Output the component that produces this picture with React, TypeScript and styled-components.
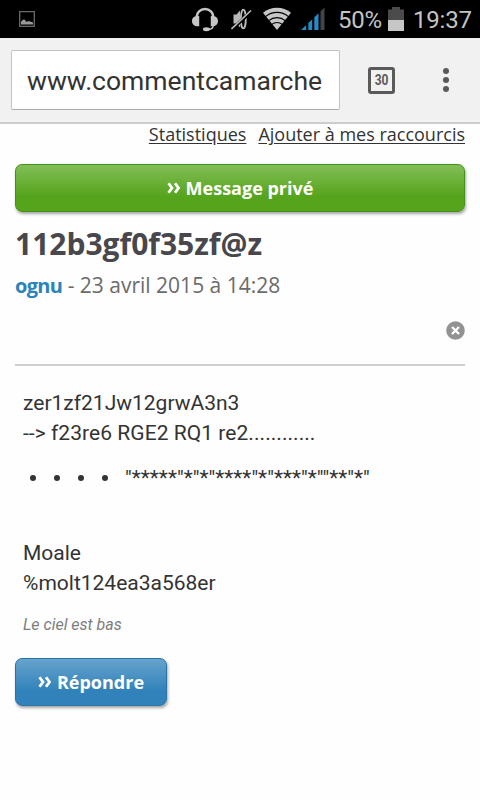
import React from "react";
import styled, { createGlobalStyle } from "styled-components";

const GlobalStyle = createGlobalStyle`
    * { box-sizing: border-box; }
    body {
        margin: 0;
        background: #fff;
        font-family: "Open Sans", "Noto Sans", sans-serif;
        overflow: hidden;
    }
`;

const Screen = styled.div`
    width: 480px;
    height: 800px;
    background: #fefefe;
    overflow: hidden;
`;

const StatusBar = styled.div`
    display: flex;
    align-items: center;
    height: 38px;
    padding: 0 8px 0 19px;
    background: #000;
    color: #c4c4c4;
    font: 24px/38px Roboto, sans-serif;
`;

const StatusIcon = styled.svg<{ $gap?: number }>`
    display: block;
    flex: none;
    margin-left: ${(p) => p.$gap || 0}px;
`;

const StatusText = styled.span<{ $gap: number; $width: number }>`
    flex: none;
    margin-left: ${(p) => p.$gap}px;
    width: ${(p) => p.$width}px;
    padding-top: 1px;
    letter-spacing: -0.2px;
    white-space: nowrap;
`;

const Toolbar = styled.div`
    display: flex;
    align-items: center;
    height: 86px;
    padding: 0 0 1px 11px;
    background: #f1f1f1;
    border-bottom: 2px solid #cdcdcd;
`;

const AddressField = styled.div`
    width: 329px;
    height: 60px;
    padding-left: 15px;
    border: 1px solid #c4c4c4;
    border-bottom-color: #ababab;
    border-radius: 2px;
    background: #fff;
    color: #333;
    font: 26.5px/60px Roboto, sans-serif;
    white-space: nowrap;
`;

const TabCounter = styled.div`
    display: flex;
    align-items: center;
    justify-content: center;
    width: 27px;
    height: 27px;
    margin: 1px 0 0 28px;
    border: 3px solid #5a5a5a;
    border-radius: 3px;
    color: #5a5a5a;
    font: bold 15px/21px Roboto, sans-serif;

    span {
        transform: scaleX(0.8);
    }
`;

const MenuDots = styled.div`
    display: flex;
    flex-direction: column;
    gap: 3px;
    margin-left: 48px;
`;

const Dot = styled.i`
    width: 6px;
    height: 6px;
    border-radius: 50%;
    background: #5a5a5a;
`;

const Page = styled.div`
    padding: 0 15px;
`;

const Links = styled.div`
    display: flex;
    justify-content: flex-end;
    gap: 12px;
    height: 40px;
    line-height: 20px;
`;

const PageLink = styled.a`
    color: #333;
    font-size: 18px;
    text-decoration: underline;
    text-underline-offset: 2px;
    white-space: nowrap;
`;

const Button = styled.a<{ $blue?: boolean }>`
    display: flex;
    align-items: center;
    justify-content: center;
    gap: 5px;
    width: ${(p) => (p.$blue ? "152px" : "100%")};
    height: 48px;
    border: 1px solid ${(p) => (p.$blue ? "#2a73a5" : "#43911a")};
    border-radius: 7px;
    background: ${(p) =>
        p.$blue
            ? "linear-gradient(#67a3cd, #3182ba 70%, #3182ba)"
            : "linear-gradient(#82be57, #56a41c 68%, #56a41c)"};
    box-shadow: 1px 2px 3px rgba(0, 0, 0, 0.35);
    color: #fff;
    font-size: 18px;
    font-weight: bold;
    line-height: 44px;
    white-space: nowrap;
`;

const Title = styled.h1`
    height: 42px;
    margin: 11px 0 1px;
    color: #47474c;
    font-size: 30px;
    line-height: 42px;
`;

const Meta = styled.div`
    height: 40px;
    color: #6b6b6b;
    font-size: 21px;
    line-height: 39px;

    b {
        color: #2b83bb;
        font-size: 20px;
        letter-spacing: -0.7px;
    }
`;

const CloseRow = styled.div`
    display: flex;
    justify-content: flex-end;
    height: 60px;
    padding-top: 15px;
    border-bottom: 2px solid #cfcfcf;
`;

const Message = styled.div`
    padding: 22px 8px 0;
    color: #333;
    font: 21px/30px Roboto, sans-serif;
`;

const Line = styled.div<{ $spacing?: number }>`
    height: 30px;
    letter-spacing: ${(p) => p.$spacing || 0}px;
    white-space: nowrap;
`;

const SymbolLine = styled.div`
    display: flex;
    align-items: center;
    height: 90px;
    padding: 0 0 30px 7px;
`;

const Bullets = styled.div`
    display: flex;
    gap: 18px;
    margin: 0 17px 0 0;

    i {
        width: 6px;
        height: 6px;
        border-radius: 50%;
        background: #333;
    }
`;

const Stars = styled.span`
    font-size: 21px;
    white-space: nowrap;
`;

const Signature = styled.div`
    height: 60px;
    color: #7d7d7d;
    font: italic 16px/53px Roboto, sans-serif;
`;

const Chevrons = () => (
    <svg width="14" height="12" viewBox="0 0 14 12" fill="none" stroke="#fff" strokeWidth="2.8">
        <path d="M1.5 1.2L5 6L1.5 10.8M8 1.2L11.5 6L8 10.8" />
    </svg>
);

const App = () => {
    return (
        <Screen>
            <GlobalStyle />
            <StatusBar>
                <StatusIcon width="16" height="16" viewBox="0 0 16 16">
                    <path d="M.7.7h14.6v14.6H.7z" fill="none" stroke="#6a6a6a" strokeWidth="1.3" />
                    <path d="M2 13.5V11l1.5-2 2-.5 2 2.5 2-1 4.5 1.5v2z" fill="#999" />
                </StatusIcon>
                <StatusIcon $gap={157} width="26" height="25" viewBox="0 0 27 25" fill="none" stroke="#c6c6c6">
                    <path d="M4.8 11V10a8.7 8.3 0 0 1 17.4 0V11" strokeWidth="2.6" />
                    <path d="M7.5 9C2 8.5 0 11 0 14s2 6 7.5 5.5zM19.5 9C25 8.5 27 11 27 14s-2 6-7.5 5.5z" fill="#c6c6c6" stroke="none" />
                    <path d="M22 18.5c0 3-2 4.3-5 4.3" strokeWidth="1.6" />
                    <ellipse cx="15" cy="22.6" rx="3.7" ry="2" fill="#c6c6c6" stroke="none" />
                </StatusIcon>
                <StatusIcon $gap={13} width="21" height="24" viewBox="0 0 21 24" fill="none" stroke="#bdbdbd">
                    <path d="M2.5 7.5h3l3.5-4v17l-3.5-4h-3z" fill="#b8b8b8" stroke="none" />
                    <ellipse cx="12.3" cy="12" rx="2.5" ry="9.4" strokeWidth="1.8" />
                    <path d="M1 22.3L20.3 4.3" stroke="#000" strokeWidth="3.4" />
                    <path d="M.5 22L20 3.5" strokeWidth="1.6" />
                </StatusIcon>
                <StatusIcon $gap={10} width="30" height="24" viewBox="0 0 30 24" fill="none" stroke="#c6c6c6">
                    <path d="M1 5.8a22 22 0 0 1 28 0L15 23z" fill="#c6c6c6" stroke="none" />
                    <path d="M3.5 9.6a18 18 0 0 1 23 0M6.7 13.6a13 13 0 0 1 16.6 0M9.8 17.4a8 8 0 0 1 10.4 0" stroke="#000" strokeWidth="1.2" />
                </StatusIcon>
                <StatusIcon $gap={9} width="24" height="24" viewBox="0 0 24 24" fill="#248bc7">
                    <path d="M0 23L5.2 18V23zM7.3 16L11.2 12.2V23H7.3zM13.3 10.3L17.5 6.2V23h-4.2z" />
                    <path d="M19.5 4.3L23.5.5V23h-4z" fill="#444" />
                </StatusIcon>
                <StatusText $gap={13} $width={43}>50%</StatusText>
                <StatusIcon $gap={7} width="16" height="24" viewBox="0 0 16 24">
                    <path d="M0 2.5h4V0h8v2.5h4V24H0z" fill="#4b4b4b" />
                    <path d="M0 13h16v11H0z" fill="#c6c6c6" />
                </StatusIcon>
                <StatusText $gap={9} $width={58}>19:37</StatusText>
            </StatusBar>
            <Toolbar>
                <AddressField>www.commentcamarche</AddressField>
                <TabCounter>
                    <span>30</span>
                </TabCounter>
                <MenuDots>
                    <Dot />
                    <Dot />
                    <Dot />
                </MenuDots>
            </Toolbar>
            <Page>
                <Links>
                    <PageLink>Statistiques</PageLink>
                    <PageLink>Ajouter à mes raccourcis</PageLink>
                </Links>
                <Button>
                    <Chevrons />
                    Message privé
                </Button>
                <Title>112b3gf0f35zf@z</Title>
                <Meta>
                    <b>ognu</b> - 23 avril 2015 à 14:28
                </Meta>
                <CloseRow>
                    <svg width="19" height="19" viewBox="0 0 19 19">
                        <circle cx="9.5" cy="9.5" r="9.3" fill="#929292" />
                        <path d="M6 6l7 7M13 6l-7 7" stroke="#fff" strokeWidth="2.4" />
                    </svg>
                </CloseRow>
                <Message>
                    <Line>zer1zf21Jw12grwA3n3</Line>
                    <Line $spacing={0.05}>{"--> f23re6 RGE2 RQ1 re2............"}</Line>
                    <SymbolLine>
                        <Bullets>
                            <i />
                            <i />
                            <i />
                            <i />
                        </Bullets>
                        <Stars>{'"*****"*"*"****"*"***"*""**"*"'}</Stars>
                    </SymbolLine>
                    <Line>Moale</Line>
                    <Line>%molt124ea3a568er</Line>
                    <Signature>Le ciel est bas</Signature>
                </Message>
                <Button $blue>
                    <Chevrons />
                    Répondre
                </Button>
            </Page>
        </Screen>
    );
};

export default App;
